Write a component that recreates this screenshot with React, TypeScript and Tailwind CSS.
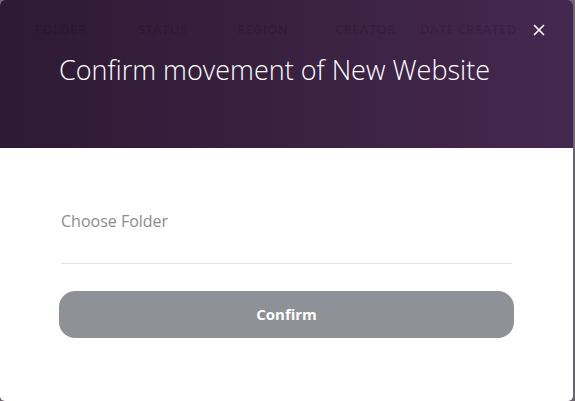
import React from 'react';
import { X } from 'lucide-react';

const COLUMNS = [
  { label: 'FOLDER', w: 'w-[103px]' },
  { label: 'STATUS', w: 'w-[99px]' },
  { label: 'REGION', w: 'w-[98px]' },
  { label: 'CREATOR', w: 'w-[85px]' },
  { label: 'DATE CREATED', w: '' },
];

export default function App() {
  return (
    <div className="w-[575px] h-[401px] bg-[#6b6570] overflow-hidden" style={{ fontFamily: '"Open Sans", "Noto Sans", sans-serif' }}>
      <div className="w-[573px] h-[401px] rounded-[5px] overflow-hidden bg-white flex flex-col">
        {/* Header */}
        <div className="relative h-[148px] bg-gradient-to-r from-[#2e1a33] to-[#45284f] flex flex-col">
          {/* faint table header behind the modal */}
          <div className="absolute top-[20px] left-[35px] flex text-[13px] font-semibold text-black/15 tracking-wide">
            {COLUMNS.map((c) => (
              <span key={c.label} className={c.w}>{c.label}</span>
            ))}
          </div>
          <button className="absolute top-[21px] right-[25px] text-white">
            <X size={18} strokeWidth={2.2} />
          </button>
          <h1 className="relative mt-[50px] ml-[59px] text-white text-[27px] font-light leading-[40px]">
            Confirm movement of New Website
          </h1>
        </div>

        {/* Body */}
        <div className="flex flex-col px-[59px] pt-[61px]">
          <div className="mx-[2px] border-b border-[#e2e2e2] pb-[30px]">
            <span className="text-[16px] text-[#8c8c8c] leading-[24px]">Choose Folder</span>
          </div>
          <button className="mt-[27px] h-[47px] w-[455px] rounded-[16px] bg-[#8f9198] text-white text-[15px] font-bold">
            Confirm
          </button>
        </div>
      </div>
    </div>
  );
}
